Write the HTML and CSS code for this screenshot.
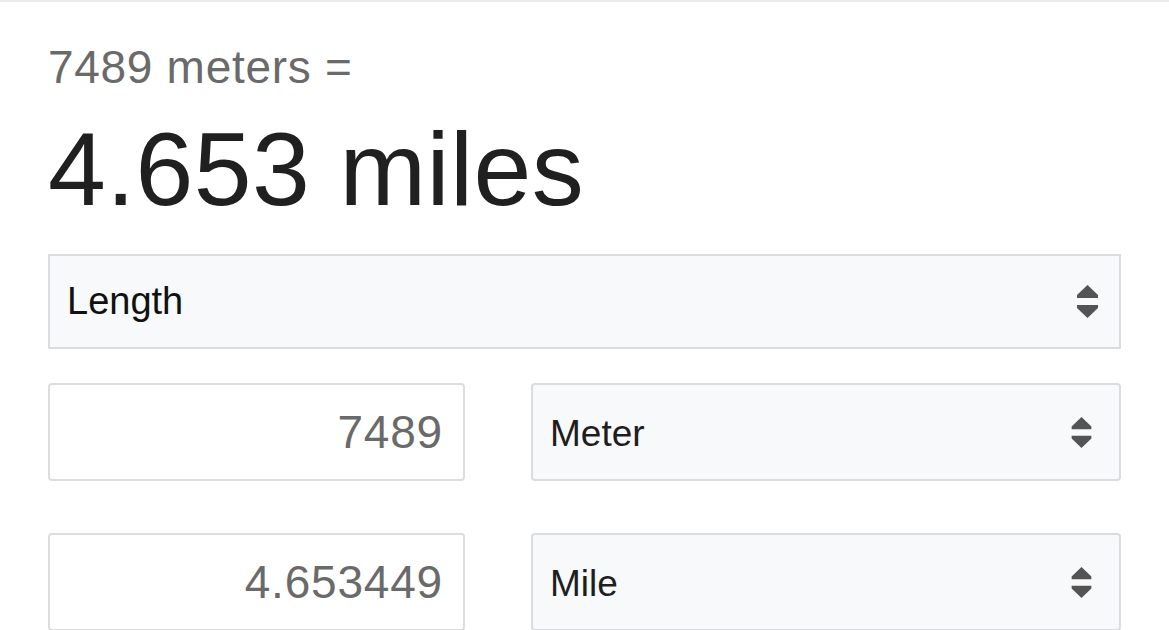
FILE: index.html
```html
<!DOCTYPE html>
<html lang="en">
<head>
<meta charset="utf-8">
<title>Unit converter</title>
<link rel="stylesheet" href="styles.css">
</head>
<body>
<div class="card">
  <div class="from">7489 meters =</div>
  <div class="result">4.653 miles</div>
  <div class="select select-main">
    <span class="select-label">Length</span>
    <svg class="updown" width="21" height="33" viewBox="0 0 21 33" aria-hidden="true">
      <polygon points="10.5,0 21,10 21,13 0,13 0,10" />
      <polygon points="0,20 21,20 21,23 10.5,33 0,23" />
    </svg>
  </div>
  <div class="row">
    <input class="num" type="text" value="7489">
    <div class="select select-unit">
      <span class="select-label">Meter</span>
      <svg class="updown" width="21" height="31" viewBox="0 0 21 33" aria-hidden="true">
        <polygon points="10.5,0 21,10 21,13 0,13 0,10" />
        <polygon points="0,20 21,20 21,23 10.5,33 0,23" />
      </svg>
    </div>
  </div>
  <div class="row">
    <input class="num" type="text" value="4.653449">
    <div class="select select-unit">
      <span class="select-label">Mile</span>
      <svg class="updown" width="21" height="31" viewBox="0 0 21 33" aria-hidden="true">
        <polygon points="10.5,0 21,10 21,13 0,13 0,10" />
        <polygon points="0,20 21,20 21,23 10.5,33 0,23" />
      </svg>
    </div>
  </div>
</div>
</body>
</html>
```

FILE: styles.css
```css
html, body {
  margin: 0;
  padding: 0;
  background: #ffffff;
}
body {
  font-family: "Liberation Sans", Arial, sans-serif;
  overflow: hidden;
}
.card {
  border-top: 2px solid #ececec;
  padding: 39px 48px 0 48px;
}
.from {
  font-size: 46px;
  line-height: 52px;
  color: #6a6a6a;
  letter-spacing: 0.7px;
}
.result {
  margin-top: 24px;
  font-size: 104px;
  line-height: 104px;
  color: #202020;
  letter-spacing: 0.4px;
}
.select {
  box-sizing: border-box;
  display: flex;
  align-items: center;
  justify-content: space-between;
  background: #f8f9fa;
  border: 2px solid #dadcdf;
  color: #111;
}
.select-main {
  margin-top: 33px;
  height: 95px;
  padding: 0 21px 0 17px;
  font-size: 38px;
  border-radius: 1px;
}
.select-unit {
  height: 98px;
  padding: 4px 27px 0 17px;
  font-size: 37px;
  border-radius: 4px;
  color: #1e1e1e;
}
.updown {
  display: block;
  fill: #545454;
}
.select-unit .updown {
  margin-top: -4px;
}
.row {
  display: grid;
  grid-template-columns: 417fr 590fr;
  column-gap: 66px;
  margin-top: 34px;
}
.row + .row {
  margin-top: 52px;
}
.num {
  box-sizing: border-box;
  width: 100%;
  height: 98px;
  margin: 0;
  border: 2px solid #dddddd;
  border-radius: 4px;
  background: #ffffff;
  padding: 0 20px 0 10px;
  font-family: "Liberation Sans", Arial, sans-serif;
  font-size: 46px;
  letter-spacing: 0.8px;
  color: #6a6a6a;
  text-align: right;
  outline: none;
}
```
